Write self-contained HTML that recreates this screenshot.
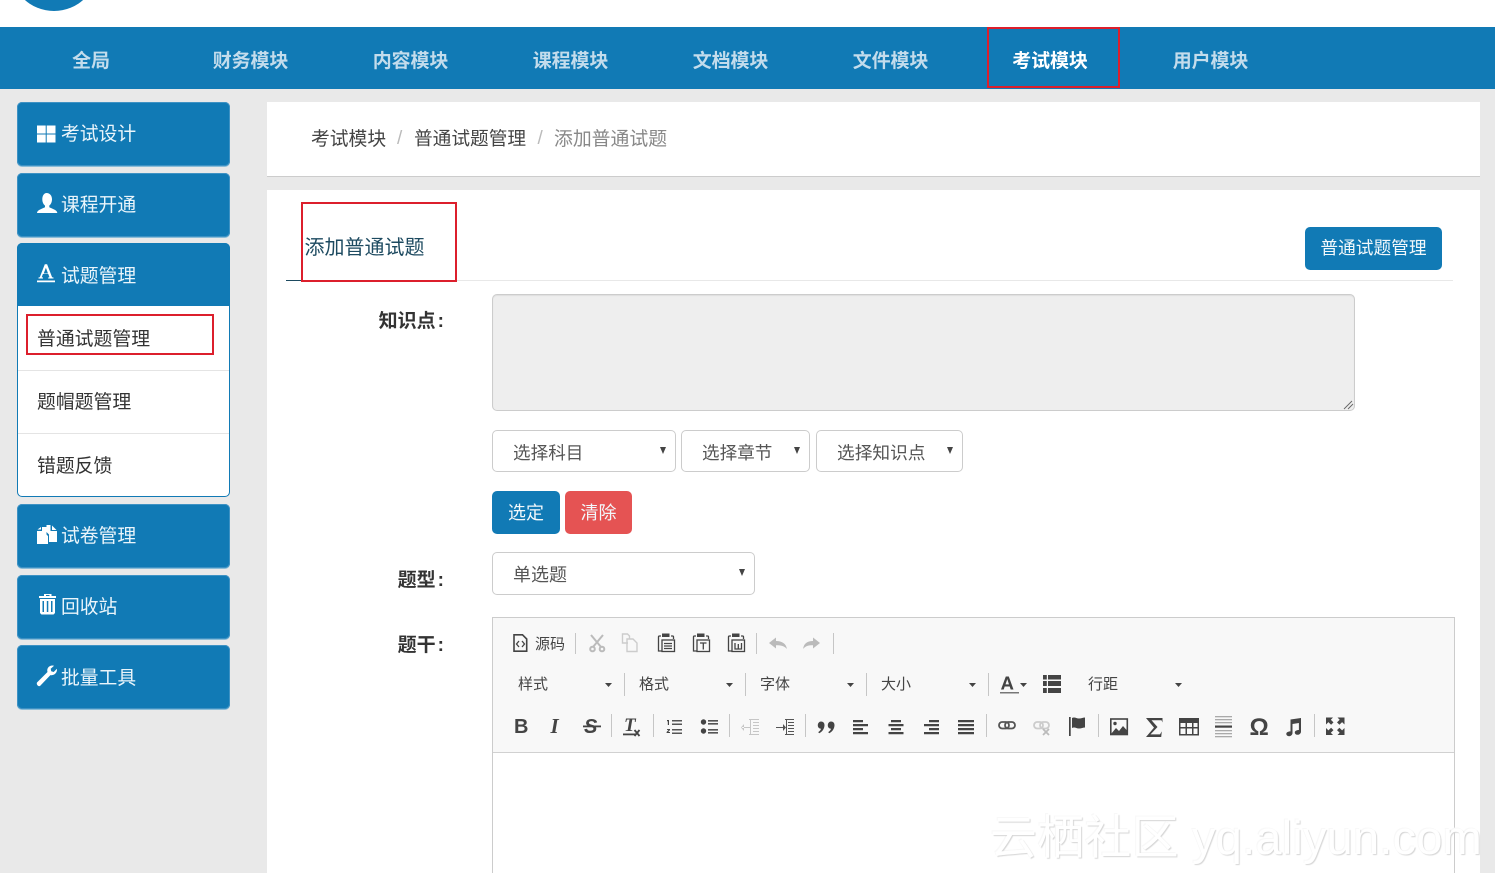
<!DOCTYPE html>
<html lang="zh-CN">
<head>
<meta charset="utf-8">
<title>添加普通试题</title>
<style>
html,body{margin:0;padding:0;width:1495px;height:873px;overflow:hidden;background:#e9e9e9}
body{position:relative;font-family:"Liberation Sans","Noto Sans CJK SC",sans-serif;font-size:19px;color:#333}
div,span{box-sizing:border-box}
.a{position:absolute}
.t{position:absolute;white-space:nowrap;line-height:30px;height:30px}
.nav{position:absolute;left:0;top:27px;width:1495px;height:62px;background:#117ab5}
.n{position:absolute;top:49px;height:26px;line-height:26px;width:120px;text-align:center;font-weight:700;font-size:19px;letter-spacing:-.1px;color:#c3dcec;white-space:nowrap}
.red{position:absolute;border:2px solid #dc1f2c}
.side{position:absolute;left:17px;width:213px;height:64px;background:#117ab5;border-radius:5px;box-shadow:0 1px 0 #8bbdd8,inset 0 0 0 1px #3e92c4}
.st{position:absolute;left:61px;color:#eaf5fb;font-size:18.800px;line-height:30px;height:30px;white-space:nowrap}
.sub{position:absolute;left:37px;color:#333;font-size:18.850px;line-height:30px;height:30px;white-space:nowrap}
.card{position:absolute;left:267px;width:1213px;background:#fff}
.sel{position:absolute;background:#fff;border:1px solid #ccc;border-radius:5px}
.car{position:absolute;width:0;height:0;border-left:3.5px solid transparent;border-right:3.5px solid transparent;border-top:7px solid #444}
.lab{position:absolute;font-weight:700;font-size:19px;line-height:30px;height:30px;text-align:right;right:1051px;white-space:nowrap;color:#333}
.lab span{margin-left:2px}
.btn{position:absolute;border-radius:5px;color:#f2f8fb;font-size:19px;text-align:center;white-space:nowrap}
.tb{position:absolute;font-size:15px;line-height:20px;height:20px;color:#444;white-space:nowrap}
.wm{position:absolute;left:990px;top:808px;font-family:"Liberation Sans","Noto Sans CJK SC",sans-serif;font-size:47px;line-height:60px;height:60px;color:#fff;white-space:nowrap;text-shadow:1px 1px 1px #d6d6d6,-1px -1px 0 #f8f8f8;letter-spacing:.2px}
</style>
</head>
<body>
<div class="a" style="left:0;top:0;width:1495px;height:27px;background:#fff;overflow:hidden">
  <div class="a" style="left:10px;top:-77px;width:88px;height:88px;border-radius:50%;background:#117ab5"></div>
</div>
<div class="nav"></div>
<div class="n" style="left:31px">全局</div>
<div class="n" style="left:190.500px">财务模块</div>
<div class="n" style="left:350.500px">内容模块</div>
<div class="n" style="left:510.500px">课程模块</div>
<div class="n" style="left:670.500px">文档模块</div>
<div class="n" style="left:830.500px">文件模块</div>
<div class="n" style="left:990px;color:#fff">考试模块</div>
<div class="n" style="left:1150.500px">用户模块</div>
<div class="red" style="left:987px;top:27px;width:133px;height:61px"></div>

<!-- sidebar -->
<div class="side" style="top:102px"></div>
<div class="side" style="top:173px"></div>
<div class="a" style="left:17px;top:243px;width:213px;height:254px;background:#fff;border:1px solid #117ab5;border-radius:5px"></div>
<div class="side" style="top:243px;height:63px;border-radius:5px 5px 0 0;box-shadow:none"></div>
<div class="side" style="top:504px"></div>
<div class="side" style="top:575px"></div>
<div class="side" style="top:645px"></div>
<div class="st" style="top:119px">考试设计</div>
<div class="st" style="top:190px">课程开通</div>
<div class="st" style="top:261px">试题管理</div>
<div class="st" style="top:521px">试卷管理</div>
<div class="st" style="top:592px">回收站</div>
<div class="st" style="top:663px">批量工具</div>
<div class="sub" style="top:324px">普通试题管理</div>
<div class="sub" style="top:387px">题帽题管理</div>
<div class="sub" style="top:451px">错题反馈</div>
<div class="a" style="left:18px;top:370px;width:211px;height:1px;background:#e4e4e4"></div>
<div class="a" style="left:18px;top:433px;width:211px;height:1px;background:#e4e4e4"></div>
<div class="red" style="left:26px;top:314px;width:188px;height:41px"></div>

<svg class="a" style="left:0;top:0" width="260" height="720" viewBox="0 0 260 720" fill="#fff">
  <path d="M37 125.500h8.700v8H37zM46.700 125.500H55.500v8h-8.800zM37 134.500h8.700v8H37zM46.700 134.500H55.500v8h-8.800z"/>
  <path d="M46.500 193c3.500 0 5.500 2.800 5.500 6.300 0 2.700-1.100 5.100-2.700 6.300v1.700c2.300 1.400 8 2.600 8 5.700H37c0-3.100 5.700-4.300 8-5.700v-1.700c-1.600-1.200-2.700-3.600-2.700-6.300 0-3.500 1.700-6.300 4.200-6.300z"/>
  <path d="M37 280.500h18v1.800H37zM38.500 278.500v-1l1.300-.2 5-13h2.300l5 13 1.400.2v1h-5.300v-1l1.300-.2-1.200-3.300h-5.400l-1.200 3.300 1.300.2v1zM43.700 273.500h4.300l-2.100-5.800z"/>
  <path d="M37 531h5v-4h4.500v7.500l1.500 1.500v8H37zM37.500 529.500l3.500-2.500v2.500z"/>
  <path d="M46.500 525h4v6h6.500v11h-8v-7.500l-2.500-2.500zM52 525.500l4.500 4.500H52z"/>
  <path fill-rule="evenodd" d="M44 594h7.500v2H56v2H39v-2h5zM46 595v1h3.500v-1zM40 599h15v14l-1.500 1.500h-12L40 613zM42.500 601v11h1.500v-11zM46.800 601v11h1.500v-11zM51 601v11h1.500v-11z"/>
  <path d="M37 682.500l10.500-10.500c-1-3 1-6.500 5-6.500.6 0 1.100.1 1.600.3l-3.400 3 .5 2.500 2.500.7 3.200-3.200c.6 3.600-2.300 7-6.500 6.300L40 686c-1.500.8-4-1.500-3-3.500z"/>
</svg>

<!-- breadcrumb -->
<div class="card" style="top:102px;height:75px;border-bottom:1px solid #ccc"></div>
<div class="t" style="left:311px;top:124px;color:#444;font-size:18.8px">考试模块</div>
<div class="t" style="left:397px;top:124px;color:#bbb">/</div>
<div class="t" style="left:414px;top:124px;color:#444;font-size:18.7px">普通试题管理</div>
<div class="t" style="left:537.500px;top:124px;color:#bbb">/</div>
<div class="t" style="left:554px;top:124px;color:#888;font-size:18.85px">添加普通试题</div>

<!-- main card -->
<div class="card" style="top:190px;height:683px"></div>
<div class="t" style="left:304.500px;top:233px;font-size:20px;color:#1d4a60">添加普通试题</div>
<div class="a" style="left:286px;top:280px;width:16px;height:1px;background:#1d4a60"></div>
<div class="a" style="left:456px;top:280px;width:997px;height:1px;background:#e8e8e8"></div>
<div class="red" style="left:301px;top:202px;width:156px;height:80px"></div>
<div class="btn" style="left:1305px;top:227px;width:137px;height:43px;line-height:43px;font-size:17.7px;background:#117ab5">普通试题管理</div>

<div class="lab" style="top:307px">知识点<span>:</span></div>
<div class="a" style="left:492px;top:294px;width:863px;height:117px;background:#eee;border:1px solid #ccc;border-radius:5px;box-shadow:inset 0 1px 1px rgba(0,0,0,.07)"></div>
<svg class="a" style="left:1342px;top:399px" width="12" height="11" fill="none" stroke="#666" stroke-width=".9"><path d="M2 10l8-8M6 10l5-5"/></svg>

<div class="sel" style="left:492px;top:430px;width:184px;height:42px"></div>
<div class="sel" style="left:681px;top:430px;width:129px;height:42px"></div>
<div class="sel" style="left:816px;top:430px;width:147px;height:42px"></div>
<div class="t" style="left:513px;top:438px;font-size:17.600px;color:#555">选择科目</div>
<div class="t" style="left:702px;top:438px;font-size:17.600px;color:#555">选择章节</div>
<div class="t" style="left:837px;top:438px;font-size:17.700px;color:#555">选择知识点</div>
<div class="car" style="left:660px;top:447px"></div>
<div class="car" style="left:794px;top:447px"></div>
<div class="car" style="left:947px;top:447px"></div>

<div class="btn" style="left:492px;top:491px;width:68px;height:43px;line-height:44px;font-size:18px;background:#117ab5">选定</div>
<div class="btn" style="left:565px;top:491px;width:67px;height:43px;line-height:44px;font-size:18px;background:#e55353">清除</div>

<div class="lab" style="top:566px">题型<span>:</span></div>
<div class="sel" style="left:492px;top:552px;width:263px;height:43px"></div>
<div class="t" style="left:513px;top:560px;font-size:18px;color:#555">单选题</div>
<div class="car" style="left:739px;top:569px"></div>

<div class="lab" style="top:631px">题干<span>:</span></div>

<!-- editor -->
<div class="a" style="left:492px;top:617px;width:963px;height:270px;background:#fff;border:1px solid #ccc"></div>
<div class="a" style="left:493px;top:618px;width:961px;height:135px;background:#f8f8f8;border-bottom:1px solid #d1d1d1"></div>

<div class="tb" style="left:535px;top:634.500px">源码</div>
<div class="tb" style="left:518px;top:674.500px">样式</div>
<div class="tb" style="left:639px;top:674.500px">格式</div>
<div class="tb" style="left:760px;top:674.500px">字体</div>
<div class="tb" style="left:881px;top:674.500px">大小</div>
<div class="tb" style="left:1088px;top:674.500px">行距</div>

<svg class="a" style="left:0;top:0" width="1495" height="873" viewBox="0 0 1495 873" fill="#444" font-family="'Liberation Serif',serif">
  <!-- separators -->
  <g fill="#c6c6c6">
    <rect x="575" y="633" width="1" height="21"/><rect x="756" y="633" width="1" height="21"/><rect x="833" y="633" width="1" height="21"/>
    <rect x="624" y="673" width="1" height="23"/><rect x="745" y="673" width="1" height="23"/><rect x="866" y="673" width="1" height="23"/><rect x="988" y="673" width="1" height="23"/>
    <rect x="611" y="714" width="1" height="23"/><rect x="653" y="714" width="1" height="23"/><rect x="729" y="714" width="1" height="23"/><rect x="805" y="714" width="1" height="23"/><rect x="986" y="714" width="1" height="23"/><rect x="1098" y="714" width="1" height="23"/><rect x="1314" y="714" width="1" height="23"/>
  </g>
  <!-- carets -->
  <path d="M605 683h7l-3.500 4zM726 683h7l-3.500 4zM847 683h7l-3.500 4zM969 683h7l-3.500 4zM1020 683h7l-3.500 4zM1175 683h7l-3.500 4z"/>
  <!-- source -->
  <path fill="none" stroke="#444" stroke-width="1.600" d="M514 634.800h8.500l4.200 4.200v12.200H514z"/>
  <path fill="none" stroke="#444" stroke-width="1.300" d="M519 641l-2.500 3 2.500 3M522 641l2.500 3-2.500 3"/>
  <!-- cut -->
  <g fill="none" stroke="#bbb" stroke-width="2"><path d="M591 635l10 12M603 635l-10 12"/><circle cx="592.500" cy="649" r="2.300"/><circle cx="602" cy="649" r="2.300"/></g>
  <!-- copy -->
  <g fill="none" stroke="#ccc" stroke-width="1.400"><path d="M628 643h-5.500v-9h5l2 2v3"/><path d="M627 639h6l4 4v8.500H627z"/></g>
  <!-- paste x3 -->
  <g fill="none" stroke="#444" stroke-width="1.300">
    <path d="M661 636h-1.500q-1 0-1 1v14h4M671 636h1.500q1 0 1 1v2"/><rect x="662" y="640" width="12.500" height="11.500"/><path d="M664 643.500h8M664 646h8M664 648.500h8"/>
    <path d="M696 636h-1.500q-1 0-1 1v14h4M706 636h1.500q1 0 1 1v2"/><rect x="697" y="640" width="12.500" height="11.500"/><path d="M700 643h6.500M703.300 643v6.500"/>
    <path d="M731 636h-1.500q-1 0-1 1v14h4M741 636h1.500q1 0 1 1v2"/><rect x="732" y="640" width="12.500" height="11.500"/><path d="M735 643v6h6.500v-6M738.300 644v5"/>
  </g>
  <path d="M662 633.500h7.500v3.500H662zM697 633.500h7.500v3.500H697zM732 633.500h7.500v3.500H732z"/>
  <!-- undo redo -->
  <path fill="#bbb" d="M769 643l7-5.500v3.500c6 0 10 2.500 11 8-2.500-3-6-3.800-11-3.800v3.300zM820 643l-7-5.500v3.500c-6 0-9 2.500-10 8 2.500-3 5-3.800 10-3.800v3.300z"/>
  <!-- font color -->
  <path d="M1001 689.500l4.800-13h3l4.700 13h-2.800l-1-3h-5l-1 3zM1005.500 684.400h3.500l-1.700-5.300z"/>
  <rect x="1000" y="692" width="19" height="1.500" fill="#777"/>
  <!-- line list -->
  <path d="M1043 675h3.800v4.500H1043zM1048 675h13v4.500h-13zM1043 681h3.800v5H1043zM1048 681h13v5h-13zM1043 688h3.800v5H1043zM1048 688h13v5h-13z"/>
  <!-- B I S -->
  <text x="514" y="733" font-family="'Liberation Sans',sans-serif" font-weight="700" font-size="20">B</text>
  <text x="550.500" y="733" font-weight="700" font-style="italic" font-size="21">I</text>
  <text x="584" y="733" font-family="'Liberation Sans',sans-serif" font-weight="700" font-style="italic" font-size="20">S</text>
  <rect x="583" y="725.500" width="18" height="1.800"/>
  <!-- Tx -->
  <text x="624" y="731" font-weight="700" font-style="italic" font-size="19">T</text>
  <rect x="623" y="733.500" width="13" height="1.800"/>
  <path fill="none" stroke="#444" stroke-width="1.800" d="M634.500 730l5 6M639.500 730l-5 6"/>
  <!-- ol -->
  <path d="M667 720h2v5h-1.200v-3.800H667zM667 729h3v1l-1.800 2H670v1h-3.400v-1l2-2.100h-1.600z"/>
  <path fill="#555" d="M672 720h10v1.500h-10zM672 723.500h10v1.500h-10zM672 729h10v1.500h-10zM672 732.500h10v1.500h-10z"/>
  <!-- ul -->
  <circle cx="703.500" cy="722" r="2.700"/><circle cx="703.500" cy="731" r="2.700"/>
  <path fill="#555" d="M708 720h10v1.600h-10zM708 723h10v1.600h-10zM708 729h10v1.600h-10zM708 732h10v1.600h-10z"/>
  <!-- outdent / indent -->
  <g fill="#c6c6c6"><path d="M742 727h9v1h-9zM744 724l-3 3.500 3 3.500zM749 719h10v1h-10zM753 722h6v1h-6zM753 725h6v1h-6zM753 728h6v1h-6zM753 731h6v1h-6zM749 734h10v1h-10z"/><rect x="750" y="719" width="1" height="16"/></g>
  <g fill="#555"><path d="M776 727h9v1h-9zM783 724l3 3.500-3 3.500zM785 719h9v1h-9zM788 722h6v1h-6zM788 725h6v1h-6zM788 728h6v1h-6zM788 731h6v1h-6zM785 734h9v1h-9z"/><rect x="786" y="719" width="1" height="16"/></g>
  <!-- quote -->
  <path d="M821 721.500c2.200 0 3.500 1.500 3.500 3.600 0 3.500-2.300 6.700-5.300 8.200l-1-1.200c1.500-1 2.600-2.300 2.800-3.400-2.200 0-3.200-1.500-3.200-3.400 0-2.200 1.500-3.800 3.200-3.800zM831 721.500c2.200 0 3.500 1.500 3.500 3.600 0 3.500-2.300 6.700-5.300 8.200l-1-1.200c1.500-1 2.600-2.300 2.800-3.400-2.200 0-3.200-1.500-3.200-3.400 0-2.200 1.500-3.800 3.200-3.800z"/>
  <!-- aligns -->
  <path d="M853 720h10v2.300h-10zM853 724h15v2.300h-15zM853 728h10v2.300h-10zM853 732h15v2.300h-15z"/>
  <path d="M891 720h10v2.300h-10zM888.500 724h15v2.300h-15zM891 728h10v2.300h-10zM888.500 732h15v2.300h-15z"/>
  <path d="M929 720h10v2.300h-10zM924 724h15v2.300h-15zM929 728h10v2.300h-10zM924 732h15v2.300h-15z"/>
  <path d="M958 720h16v2.300h-16zM958 724h16v2.300h-16zM958 728h16v2.300h-16zM958 732h16v2.300h-16z"/>
  <!-- link / unlink -->
  <g fill="none" stroke="#555" stroke-width="1.800"><rect x="999" y="722" width="10" height="6.500" rx="3.200"/><rect x="1005" y="722" width="10" height="6.500" rx="3.200"/></g>
  <g fill="none" stroke="#ccc" stroke-width="1.800"><rect x="1034" y="722" width="9" height="6.500" rx="3.200"/><rect x="1040" y="722" width="9" height="6.500" rx="3.200"/><path stroke="#bbb" d="M1043 729l6 6M1049 729l-6 6"/></g>
  <!-- flag -->
  <path d="M1069 717h1.700v19H1069zM1072 718c3-1.500 4 .5 7 .5 2.500 0 4-1 6-1v10c-2 0-3.500 1-6 1-3 0-4-2-7-.5z"/>
  <!-- image -->
  <rect x="1110.800" y="719" width="16.500" height="15.500" fill="none" stroke="#444" stroke-width="1.600"/>
  <circle cx="1115" cy="723.500" r="1.700"/>
  <path d="M1111 734l5-6 3 3 4-5 4 4.500v3.500z"/>
  <!-- sigma -->
  <path d="M1146 718h16.500v4.500l-1-2.200h-10l6 6.700-7 7.400h9.500l1.800-3-.6 5.600H1146l8-9.400z"/>
  <!-- table -->
  <path fill-rule="evenodd" d="M1179 718h20v17.500h-20zM1180.500 723v4h5v-4zM1187 723v4h5v-4zM1193.500 723v4h4v-4zM1180.500 728.500v5.500h5v-5.500zM1187 728.500v5.500h5v-5.500zM1193.500 728.500v5.500h4v-5.500z"/>
  <!-- hr -->
  <g fill="#aaa"><rect x="1215" y="716" width="17" height="1.300"/><rect x="1215" y="719" width="17" height="1.300"/><rect x="1215" y="722" width="17" height="1.300"/><rect x="1215" y="730" width="17" height="1.300"/><rect x="1215" y="733" width="17" height="1.300"/><rect x="1215" y="736" width="17" height="1.300"/></g>
  <rect x="1215" y="725.500" width="17" height="2.200"/>
  <!-- omega -->
  <text x="1249.500" y="735" font-family="'Liberation Sans',sans-serif" font-weight="700" font-size="24">Ω</text>
  <!-- music -->
  <path d="M1290.500 719.500l10.500-1.500v13.500c0 2-1.600 3.300-3.400 3.300s-2.800-1-2.800-2.300 1.400-2.500 4.100-2.500v-7l-6.400 1v9c0 1.800-1.600 3.200-3.400 3.200-1.700 0-2.800-1-2.800-2.300s1.500-2.500 4.200-2.500z"/>
  <!-- maximize -->
  <path d="M1326 717.500h7l-2.200 2.200 2.700 2.700-2.400 2.400-2.700-2.700-2.400 2.400zM1344.500 717.500h-7l2.200 2.200-2.700 2.700 2.400 2.400 2.700-2.700 2.400 2.400zM1326 735h7l-2.200-2.200 2.700-2.700-2.400-2.400-2.700 2.700-2.400-2.400zM1344.500 735h-7l2.200-2.200-2.700-2.700 2.400-2.400 2.700 2.700 2.400-2.400z"/>
</svg>

<div class="wm">云栖社区 yq.aliyun.com</div>
</body>
</html>
